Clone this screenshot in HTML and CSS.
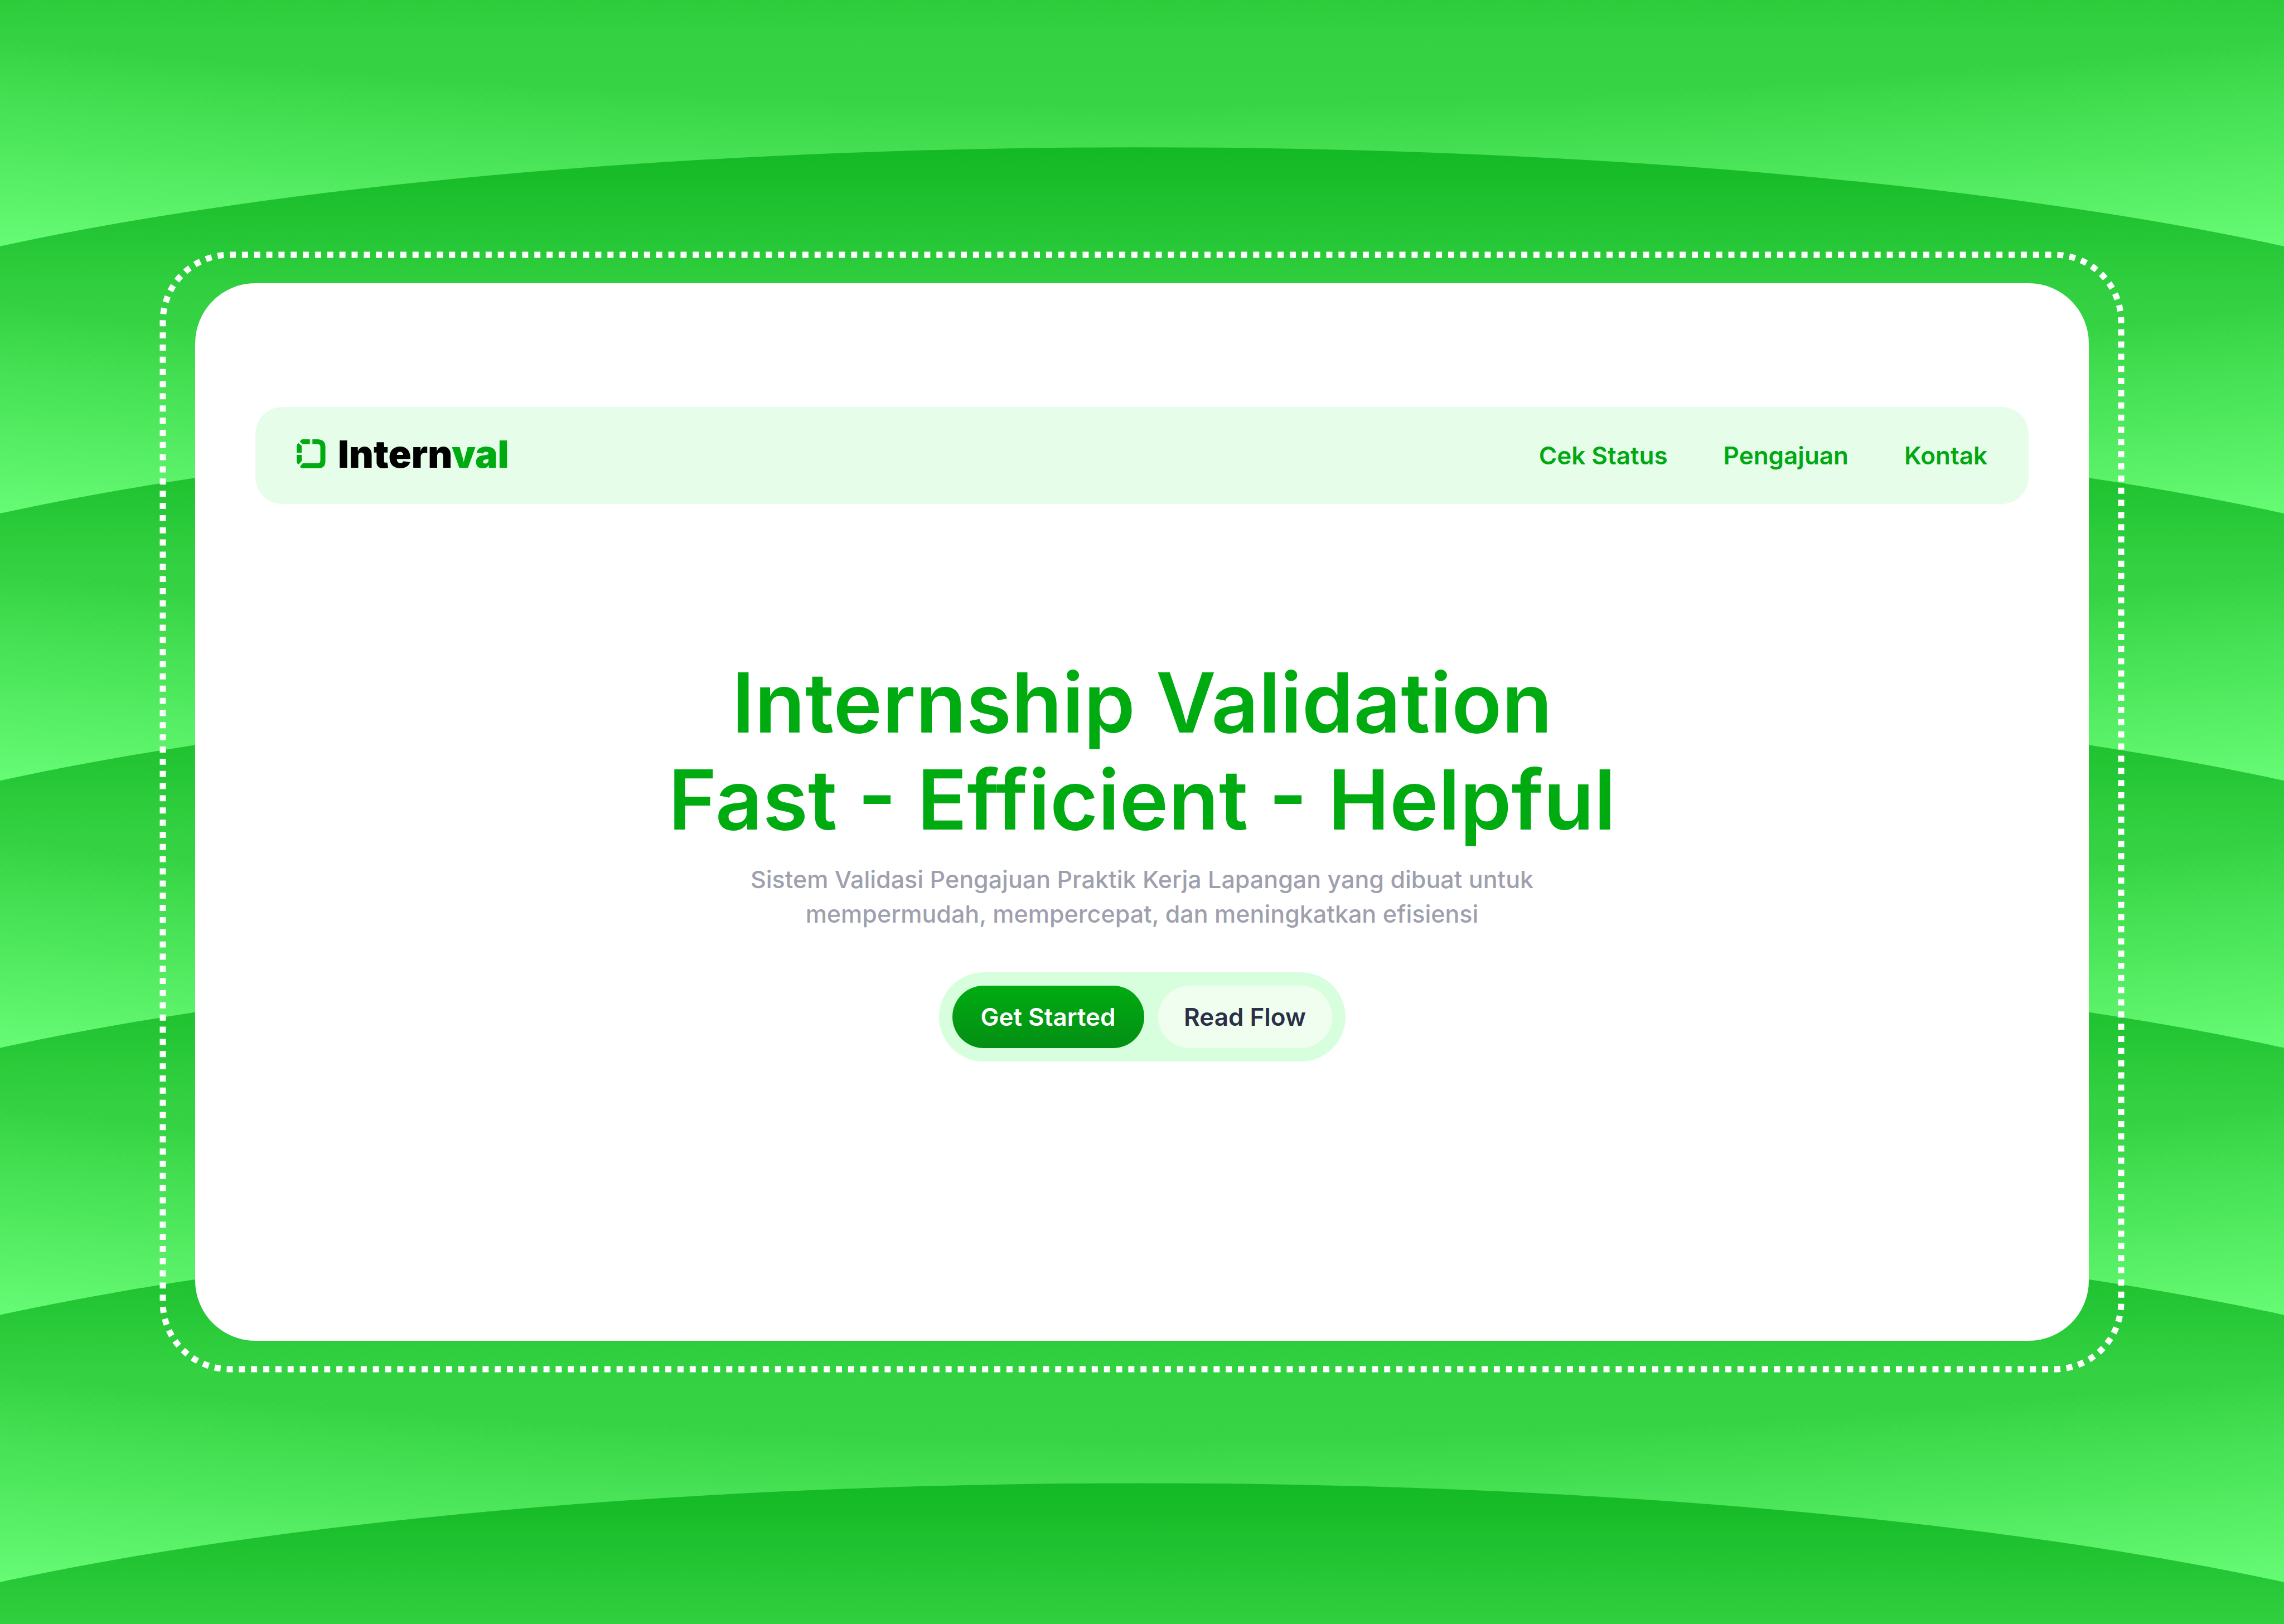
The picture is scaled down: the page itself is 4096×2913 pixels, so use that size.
FILE: index.html
```html
<!DOCTYPE html>
<html lang="id">
<head>
<meta charset="utf-8">
<title>Internval</title>
<meta name="viewport" content="width=device-width, initial-scale=1">
<link rel="stylesheet" href="styles.css">
</head>
<body>
<svg class="waves" viewBox="0 0 6000 4267" preserveAspectRatio="none" aria-hidden="true">
  <defs>
    <linearGradient id="wave-shade" gradientUnits="userSpaceOnUse" x1="0" y1="387" x2="0" y2="971">
      <stop offset="0" stop-color="#14b926"/>
      <stop offset="0.12" stop-color="#18bc29"/>
      <stop offset="0.44" stop-color="#27c837"/>
      <stop offset="0.7" stop-color="#34d242"/>
      <stop offset="1" stop-color="#37d545"/>
    </linearGradient>
    <radialGradient id="wave-light" gradientUnits="userSpaceOnUse" cx="0" cy="0" r="1" gradientTransform="translate(3000 -113) scale(8077 1583)">
      <stop offset="0.685" stop-color="#67fc76" stop-opacity="0"/>
      <stop offset="1" stop-color="#67fc76"/>
    </radialGradient>
    <g id="wave">
      <ellipse cx="3000" cy="1155" rx="4000" ry="768" fill="url(#wave-shade)"/>
      <ellipse cx="3000" cy="1155" rx="4000" ry="768" fill="url(#wave-light)"/>
    </g>
  </defs>
  <use href="#wave" y="-1404"/>
  <use href="#wave" y="-702"/>
  <use href="#wave"/>
  <use href="#wave" y="702"/>
  <use href="#wave" y="1404"/>
  <use href="#wave" y="2106"/>
  <use href="#wave" y="2808"/>
  <use href="#wave" y="3510"/>
</svg>
<div class="stage">
  <div class="frame">
    <svg class="frame-line" aria-hidden="true"><rect class="frame-dots" x="6" y="6" rx="120" pathLength="990"/></svg>
    <div class="card">
      <header class="navbar">
        <a class="brand" href="#">
          <svg class="brand-mark" viewBox="60 100 230 230" aria-hidden="true">
            <path d="M108 100H165V138H106L86 119Q94 100 108 100Z M185 100H230Q288 104 288 160V272Q288 330 230 330H108Q94 330 86 318L108 290H228Q248 288 248 268V160Q248 140 226 138H185Z M74 130L100 152V206H60V160Q60 140 74 130Z M60 224H100V272L74 300Q60 290 60 270Z"/>
          </svg>
          <span class="brand-name">Intern<span class="brand-accent">val</span></span>
        </a>
        <nav class="menu">
          <a href="#status">Cek Status</a>
          <a href="#pengajuan">Pengajuan</a>
          <a href="#kontak">Kontak</a>
        </nav>
      </header>
      <main class="hero">
        <h1>Internship Validation<br>Fast - Efficient - Helpful</h1>
        <p>Sistem Validasi Pengajuan Praktik Kerja Lapangan yang dibuat untuk<br>mempermudah, mempercepat, dan meningkatkan efisiensi</p>
        <div class="actions">
          <button class="btn btn-primary" type="button">Get Started</button>
          <button class="btn btn-soft" type="button">Read Flow</button>
        </div>
      </main>
    </div>
  </div>
</div>
</body>
</html>
```
FILE: styles.css
```css
* {
  box-sizing: border-box;
}

body {
  margin: 0;
  background: #37d545;
  font-family: Inter, "Liberation Sans", sans-serif;
}

.waves {
  position: absolute;
  inset: 0;
  z-index: -1;
  width: 100%;
  height: 100%;
}

.stage {
  display: flex;
  flex-direction: column;
  min-height: 100vh;
  padding: 451px 286px;
}

.frame {
  position: relative;
  display: flex;
  flex: 1;
  padding: 57px 64px;
}

.frame-line {
  position: absolute;
  inset: 0;
  width: 100%;
  height: 100%;
}

.frame-dots {
  width: calc(100% - 12px);
  height: calc(100% - 12px);
  fill: none;
  stroke: #fff;
  stroke-width: 11px;
  stroke-dasharray: 1 1;
}

.card {
  position: relative;
  flex: 1;
  padding: 222px 108px;
  background: #fff;
  border-radius: 108px;
}

.navbar {
  display: flex;
  align-items: center;
  justify-content: space-between;
  height: 174px;
  padding: 0 74px;
  background: #e6fee9;
  border-radius: 48px;
}

a {
  color: inherit;
  text-decoration: none;
}

.brand {
  display: flex;
  align-items: center;
  gap: 22px;
  padding-bottom: 6px;
}

.brand-mark {
  width: 52px;
  height: 52px;
  fill: #00ab11;
}

.brand-name {
  color: #000;
  font-size: 68px;
  font-weight: 900;
  line-height: 80px;
}

.brand-accent {
  color: #00ab11;
}

.menu {
  display: flex;
  gap: 100px;
  color: #00a811;
  font-size: 44px;
  font-weight: 600;
}

.hero {
  display: flex;
  flex-direction: column;
  align-items: center;
  padding-top: 270px;
  text-align: center;
}

h1 {
  margin: 0;
  color: #00ab11;
  font-size: 148px;
  font-weight: 600;
  line-height: 174px;
}

p {
  margin: 24px 0 0;
  color: #9ea0ae;
  font-size: 43px;
  font-weight: 500;
  line-height: 62px;
}

.actions {
  display: flex;
  gap: 25px;
  margin-top: 74px;
  padding: 24px;
  background: #d7ffdd;
  border-radius: 80px;
}

.btn {
  height: 112px;
  padding: 0;
  border: 0;
  border-radius: 56px;
  font: inherit;
  font-size: 44px;
  font-weight: 600;
}

.btn-primary {
  min-width: 344px;
  background: linear-gradient(#00ab11, #048f14);
  color: #fff;
}

.btn-soft {
  min-width: 312px;
  background: #effeef;
  color: #2b3048;
}
```
